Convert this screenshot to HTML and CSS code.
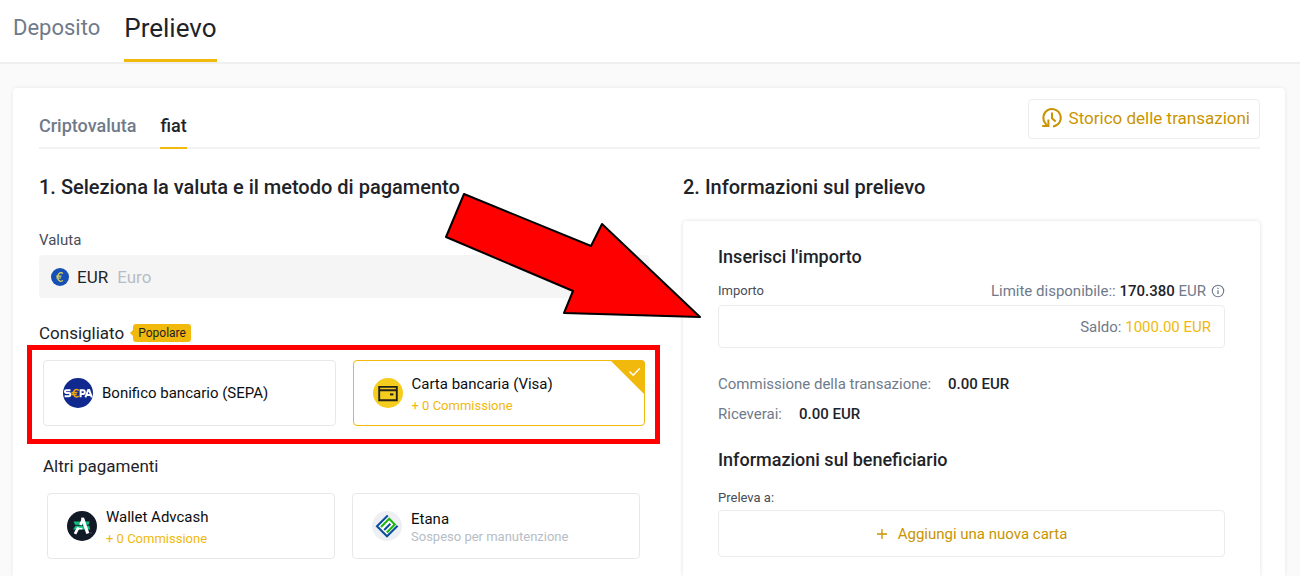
FILE: index.html
```html
<!DOCTYPE html>
<html lang="it">
<head>
<meta charset="utf-8">
<meta name="viewport" content="width=device-width, initial-scale=1">
<title>Prelievo</title>
<link rel="stylesheet" href="styles.css">
</head>
<body>
<header class="topbar">
  <nav class="topnav">
    <a class="topnav-link" href="#deposito">Deposito</a>
    <a class="topnav-link topnav-link-active" href="#prelievo">Prelievo</a>
  </nav>
</header>
<main class="page">
  <div class="card">
    <div class="card-head">
      <nav class="tabs">
        <a class="tab" href="#cripto">Criptovaluta</a>
        <a class="tab tab-active" href="#fiat">fiat</a>
      </nav>
      <button class="history" type="button">
        <svg class="history-icon" viewBox="0 0 22 22" fill="none" stroke="currentColor" stroke-width="2">
          <path d="M12 19.400A8.700 8.700 0 1 0 4.600 16.600L7 19"/>
          <path d="M1.200 19H7.400V12.600"/>
          <path d="M11 5.600v5.600l3.600 3.400"/>
        </svg>
        Storico delle transazioni
      </button>
    </div>
    <div class="columns">
      <section class="column">
        <h2 class="title">1. Seleziona la valuta e il metodo di pagamento</h2>
        <div class="label" id="currency-label">Valuta</div>
        <button class="currency" type="button" aria-haspopup="listbox" aria-labelledby="currency-label currency-value">
          <svg class="currency-icon" viewBox="0 0 18 18">
            <circle cx="9" cy="9" r="9" fill="#1650b4"/>
            <path d="M12 5.4C9.200 3.600 6.700 5.600 6.700 9s2.500 5.400 5.300 3.600M5.200 8.100h5.300M5.200 10h4.800" fill="none" stroke="#e2d45c" stroke-width="1.200"/>
          </svg>
          <span class="currency-code" id="currency-value">EUR</span>
          <span class="currency-name">Euro</span>
        </button>
        <div class="group-head">
          <h3 class="group-title">Consigliato</h3>
          <span class="badge">Popolare</span>
        </div>
        <div class="methods methods-recommended">
          <label class="method">
            <input class="method-radio" type="radio" name="method">
            <svg class="method-icon" viewBox="0 0 30 30">
              <circle cx="15" cy="15" r="15" fill="#10298e"/>
              <g fill="none" stroke="#fff" stroke-width="2">
                <path d="M7.500 12.200H3.200Q2 12.200 2 13.600T3.400 15H6Q7.400 15 7.400 16.600T6 18.300H1.600"/>
                <path d="M17.600 19.300V12.200h2.600q1.600 0 1.600 1.900T20.200 16.100H17.600"/>
                <path d="M22.400 19.300L25.200 12h1l2.600 7.300M24 17h3.600"/>
              </g>
              <path d="M15.800 12.300c-3.600-1.900-5.400.6-5.400 3s2 4.900 5.400 2.900M8.400 14.500h6M8.400 16.500h5.400" fill="none" stroke="#f0a510" stroke-width="1.500"/>
            </svg>
            <span class="method-name">Bonifico bancario (SEPA)</span>
          </label>
          <label class="method method-selected">
            <input class="method-radio" type="radio" name="method" checked>
            <svg class="method-icon" viewBox="0 0 30 30">
              <circle cx="15" cy="15" r="15" fill="#f5cd1d"/>
              <path d="M6.200 8.900h17.600v13.400H6.200zM6.200 12.200h17.600" fill="none" stroke="#23221b" stroke-width="1.900"/>
              <path d="M17 15.400h3.400v2H17z" fill="#23221b"/>
            </svg>
            <span class="method-text">
              <span class="method-name">Carta bancaria (Visa)</span>
              <span class="method-fee">+ 0 Commissione</span>
            </span>
            <svg class="method-check" viewBox="0 0 35 35">
              <path d="M0 0H31Q35 0 35 4V35z" fill="#f0b90b"/>
              <path d="M19.500 11.500l3.700 3.700 6.600-7" fill="none" stroke="#fff" stroke-width="1.500"/>
            </svg>
          </label>
        </div>
        <h3 class="group-title group-title-other">Altri pagamenti</h3>
        <div class="methods methods-other">
          <label class="method">
            <input class="method-radio" type="radio" name="method">
            <svg class="method-icon" viewBox="0 0 30 30">
              <circle cx="15" cy="15" r="15" fill="#121a27"/>
              <path d="M6.600 10.600H22.800L21.600 13.800H8zM8.400 14.800H22.400l.8 3.800H6z" fill="#12bd7e"/>
              <path d="M15.800 8L20.800 22.600" stroke="#fff" stroke-width="3.200" fill="none"/>
              <path d="M16.200 8.200L13.400 14M11.400 16.400L8 22.800" stroke="#fff" stroke-width="2.800" fill="none"/>
              <path d="M14.200 7.600h3" stroke="#fff" stroke-width="2"/>
              <path d="M10 17.600h5.400" stroke="#fff" stroke-width="1.600"/>
              <circle cx="24" cy="22" r=".8" fill="#4c5562"/>
            </svg>
            <span class="method-text">
              <span class="method-name">Wallet Advcash</span>
              <span class="method-fee">+ 0 Commissione</span>
            </span>
          </label>
          <label class="method method-disabled">
            <input class="method-radio" type="radio" name="method" disabled>
            <svg class="method-icon" viewBox="0 0 30 30">
              <circle cx="15" cy="15" r="15" fill="#eeeff3"/>
              <path d="M15 4L26 15.300 15 26.400 4 15.300z" fill="#fff"/>
              <g fill="none" stroke-width="2.100">
                <path d="M15.800 4.600L5 15.300 15 25.300 25.600 14.700" stroke="#0b4f9e"/>
                <path d="M12.200 19L18.400 12.800" stroke="#0b4f9e"/>
                <path d="M9 16L17.200 7.800 22.800 13.400 14.800 21.600" stroke="#22b512"/>
              </g>
            </svg>
            <span class="method-text method-text-tight">
              <span class="method-name">Etana</span>
              <span class="method-fee">Sospeso per manutenzione</span>
            </span>
          </label>
        </div>
      </section>
      <section class="column">
        <h2 class="title">2. Informazioni sul prelievo</h2>
        <div class="panel">
          <h3 class="panel-title">Inserisci l'importo</h3>
          <div class="amount-head">
            <label class="small-label" for="amount">Importo</label>
            <div class="limit">
              <span>Limite disponibile:: <span class="limit-value">170.380</span> EUR</span>
              <svg class="info-icon" viewBox="0 0 14 14" fill="none" stroke="currentColor">
                <circle cx="7" cy="7" r="5.700" stroke-width="1.100"/>
                <path d="M7 6.300V10M7 3.800v1.300" stroke-width="1.300"/>
              </svg>
            </div>
          </div>
          <div class="amount">
            <input class="amount-input" id="amount" type="text" inputmode="decimal">
            <span class="balance">Saldo: <span class="balance-value">1000.00 EUR</span></span>
          </div>
          <dl class="summary">
            <div class="summary-row"><dt>Commissione della transazione:</dt><dd>0.00 EUR</dd></div>
            <div class="summary-row"><dt>Riceverai:</dt><dd>0.00 EUR</dd></div>
          </dl>
          <h3 class="panel-title">Informazioni sul beneficiario</h3>
          <div class="small-label target-label">Preleva a:</div>
          <button class="add-card" type="button">
            <svg class="plus-icon" viewBox="0 0 12 12" stroke="currentColor" stroke-width="1.300"><path d="M6 1v10M1 6h10"/></svg>
            Aggiungi una nuova carta
          </button>
        </div>
      </section>
    </div>
  </div>
  <svg class="arrow" viewBox="0 0 260 130">
    <path d="M20 3L147 55 158 33 256 126 120 122 129 100 2 46z" fill="#f00" stroke="#000" stroke-width="2" stroke-linejoin="round"/>
  </svg>
</main>
</body>
</html>
```
FILE: styles.css
```css
* {
  box-sizing: border-box;
}

body {
  margin: 0;
  min-height: 100vh;
  display: flex;
  flex-direction: column;
  background: #fafafa;
  color: #1e2329;
  font-family: Roboto, "Liberation Sans", sans-serif;
  font-size: 16px;
  line-height: 20px;
}

h2, h3, dl, dd {
  margin: 0;
}

a {
  color: inherit;
  text-decoration: none;
}

button, input {
  font: inherit;
  color: inherit;
}

.topbar {
  background: #fff;
  border-bottom: 2px solid #efefef;
  padding: 0 13px;
}

.topnav {
  display: flex;
  gap: 24px;
  height: 62px;
}

.topnav-link {
  color: #707a8a;
  font-size: 22px;
  line-height: 56px;
}

.topnav-link-active {
  color: #1e2329;
  font-size: 26px;
  border-bottom: 3px solid #f0b90b;
}

.page {
  position: relative;
  flex: 1;
  display: flex;
  padding: 24px 15px 0 13px;
}

.card {
  flex: 1;
  display: flex;
  flex-direction: column;
  padding: 11px 25px 0 26px;
  background: #fff;
  border-radius: 4px 4px 0 0;
  box-shadow: 0 0 4px rgba(0, 0, 0, 0.08);
}

.card-head {
  display: flex;
  justify-content: space-between;
  align-items: flex-start;
  height: 50px;
  border-bottom: 2px solid #f2f2f2;
}

.tabs {
  display: flex;
  gap: 24px;
}

.tab {
  height: 50px;
  color: #707a8a;
  font-size: 18px;
  font-weight: 500;
  line-height: 54px;
}

.tab-active {
  color: #1e2329;
  border-bottom: 2px solid #f0b90b;
}

.history {
  display: flex;
  align-items: center;
  gap: 6px;
  height: 40px;
  padding: 0 9px 2px 12px;
  border: 1px solid #eaecef;
  border-radius: 4px;
  background: #fff;
  color: #c99400;
  font-size: 17px;
}

.history-icon {
  width: 22px;
  height: 22px;
}

.columns {
  flex: 1;
  display: grid;
  grid-template-columns: 610fr 577fr;
  gap: 34px;
  padding-top: 26px;
}

.column {
  display: flex;
  flex-direction: column;
}

.title {
  font-size: 20px;
  font-weight: 500;
  line-height: 24px;
}

.label {
  margin-top: 31px;
  color: #474d57;
  font-size: 15px;
}

.currency {
  display: flex;
  align-items: center;
  height: 43px;
  margin-top: 5px;
  padding: 0 12px;
  border: 0;
  border-radius: 4px;
  background: #f5f5f5;
  font-size: 17px;
}

.currency-icon {
  width: 18px;
  height: 18px;
}

.currency-code {
  margin: 0 9px 0 8px;
}

.currency-name {
  color: #b7bdc6;
}

.group-head {
  display: flex;
  align-items: center;
  gap: 9px;
  margin-top: 23px;
}

.group-title {
  font-size: 17px;
  font-weight: 400;
  line-height: 24px;
}

.group-title-other {
  margin: 28px 0 0 4px;
}

.badge {
  position: relative;
  padding: 0 5px;
  border-radius: 3px;
  background: #f0b90b;
  font-size: 12px;
  line-height: 18px;
}

.badge::before {
  content: "";
  position: absolute;
  top: 5px;
  left: -3px;
  border: 4px solid transparent;
  border-left: 0;
  border-right-color: #f0b90b;
}

.methods {
  display: grid;
  grid-template-columns: 1fr 1fr;
  gap: 17px;
  margin-top: 15px;
}

.methods-recommended {
  position: relative;
  margin-left: 4px;
  margin-right: 4px;
}

.methods-recommended::after {
  content: "";
  position: absolute;
  inset: -15px -15px -18px -16px;
  border: 5px solid #f00;
  pointer-events: none;
}

.methods-other {
  margin-left: 8px;
  margin-right: 9px;
}

.method {
  position: relative;
  display: flex;
  align-items: center;
  gap: 9px;
  height: 66px;
  padding: 0 19px;
  border: 1px solid #e6e8ea;
  border-radius: 4px;
  color: #0b0e11;
}

.method-selected {
  border-color: #f0b90b;
}

.method-radio {
  position: absolute;
  opacity: 0;
}

.method-icon {
  width: 30px;
  height: 30px;
}

.method-text {
  display: grid;
  gap: 2px;
  padding-top: 4px;
}

.method-text-tight {
  gap: 0;
  line-height: 18px;
}

.method-name {
  font-size: 15px;
}

.method-fee {
  color: #f0b90b;
  font-size: 13px;
}

.method-disabled .method-fee {
  color: #b7bdc6;
}

.method-check {
  position: absolute;
  top: -1px;
  right: -1px;
  width: 35px;
  height: 35px;
}

.panel {
  flex: 1;
  margin-top: 22px;
  padding: 24px 35px 0;
  border-radius: 4px 4px 0 0;
  box-shadow: 0 0 4px rgba(0, 0, 0, 0.13);
}

.panel-title {
  font-size: 18px;
  font-weight: 500;
  line-height: 24px;
}

.amount-head {
  display: flex;
  justify-content: space-between;
  margin-top: 12px;
}

.small-label {
  color: #474d57;
  font-size: 13px;
}

.limit {
  display: flex;
  align-items: center;
  gap: 5px;
  color: #707a8a;
  font-size: 15px;
}

.limit-value {
  color: #1e2329;
  font-weight: 500;
}

.info-icon {
  width: 14px;
  height: 14px;
}

.amount {
  display: flex;
  align-items: center;
  height: 43px;
  margin-top: 4px;
  padding: 0 13px;
  border: 1px solid #eaecef;
  border-radius: 4px;
}

.amount-input {
  flex: 1;
  min-width: 0;
  padding: 0;
  border: 0;
  outline: 0;
  background: none;
}

.balance {
  color: #707a8a;
  font-size: 15px;
}

.balance-value {
  color: #f0b90b;
}

.summary {
  display: grid;
  gap: 10px;
  margin: 26px 0 24px;
  font-size: 15px;
}

.summary-row {
  display: flex;
  gap: 17px;
}

.summary-row dt {
  color: #707a8a;
}

.summary-row dd {
  font-weight: 500;
}

.target-label {
  margin-top: 16px;
}

.add-card {
  display: flex;
  align-items: center;
  justify-content: center;
  gap: 10px;
  width: 100%;
  height: 47px;
  margin-top: 2px;
  border: 1px solid #eaecef;
  border-radius: 4px;
  background: #fff;
  color: #c99400;
  font-size: 15px;
}

.plus-icon {
  width: 12px;
  height: 12px;
}

.arrow {
  position: absolute;
  top: 127px;
  left: 444px;
  width: 260px;
  height: 130px;
  pointer-events: none;
}
```
